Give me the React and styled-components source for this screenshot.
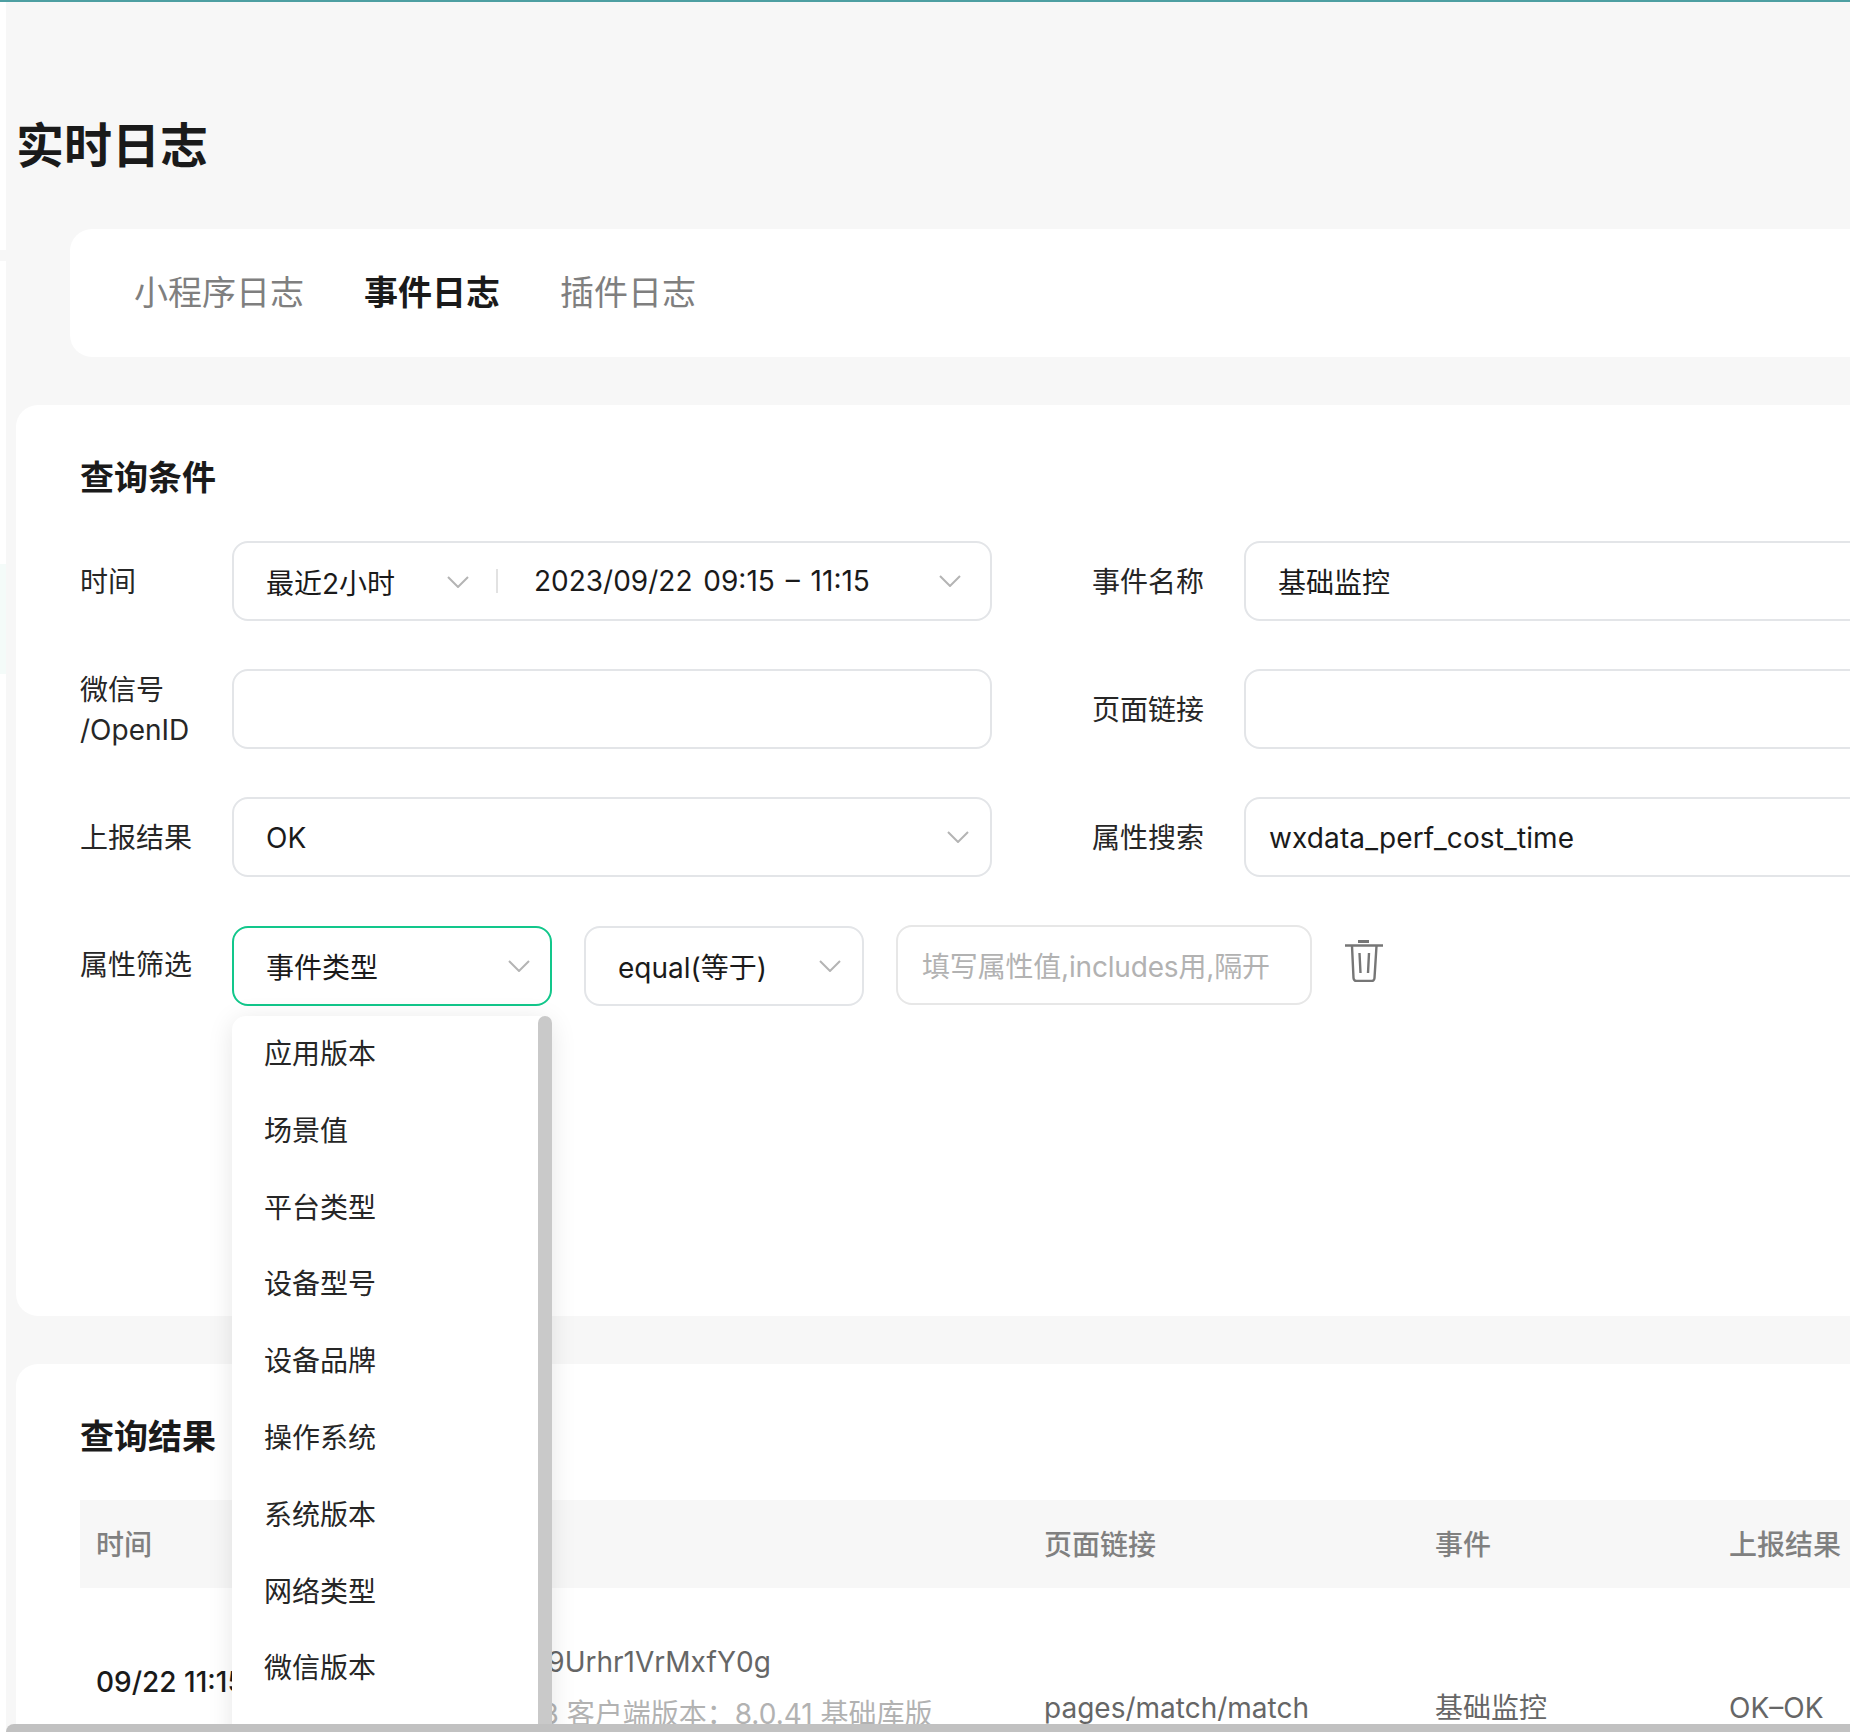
import React from 'react'
import styled, { createGlobalStyle } from 'styled-components'

const GlobalStyle = createGlobalStyle`
    html, body {
        margin: 0;
        padding: 0;
        background: #fff;
    }
    * {
        box-sizing: border-box;
    }
    body {
        font-family: Inter, "Noto Sans CJK SC", sans-serif;
        color: #1a1a1a;
    }
`

const Page = styled.div`
    position: relative;
    display: flex;
    width: 1850px;
    height: 1732px;
    overflow: hidden;
    border-top: 2px solid #4d9fa2;
`

const Rail = styled.div`
    flex: 0 0 6px;
    background: #fff;
`

const RailPatch = styled.div`
    height: ${p => p.$height}px;
    margin-top: ${p => p.$top}px;
    background: ${p => p.$color};
`

const Main = styled.main`
    flex: 1;
    min-width: 0;
    background: #f7f7f7;
`

const PageTitle = styled.h1`
    margin: 0;
    padding: 114px 0 0 10px;
    font-size: 48px;
    line-height: 60px;
    font-weight: 700;
`

const TabBar = styled.nav`
    display: flex;
    align-items: center;
    gap: 60px;
    width: 2200px;
    height: 128px;
    margin: 53px 0 0 64px;
    padding: 0 0 5px 64px;
    background: #fff;
    border-radius: 22px;
`

const Tab = styled.span`
    font-size: 34px;
    font-weight: ${p => (p.$active ? 700 : 400)};
    color: ${p => (p.$active ? '#1a1a1a' : '#7f7f7f')};
`

const Card = styled.section`
    width: 2200px;
    margin: 48px 0 0 10px;
    padding: ${p => p.$top}px 0 ${p => p.$bottom}px 64px;
    background: #fff;
    border-radius: 22px;
`

const CardTitle = styled.h2`
    margin: 0;
    font-size: 34px;
    line-height: 44px;
    font-weight: 700;
`

const Form = styled.div`
    display: flex;
    flex-direction: column;
    gap: 48px;
    margin-top: 41px;
`

const Row = styled.div`
    display: flex;
    align-items: center;
    height: 80px;
`

const FilterRow = styled.div`
    display: flex;
    align-items: flex-start;
`

const Label = styled.label`
    flex: 0 0 152px;
    margin-left: ${p => p.$gap || 0}px;
    padding-top: 2px;
    font-size: 28px;
    line-height: 40px;
    color: #262626;
`

const FilterLabel = styled(Label)`
    padding-top: 20px;
`

const Control = styled.div`
    display: flex;
    align-items: center;
    flex: 0 0 ${p => p.$width || 760}px;
    height: 80px;
    padding-left: ${p => p.$inset || 32}px;
    margin-left: ${p => p.$gap || 0}px;
    margin-top: ${p => p.$top || 0}px;
    border: 2px solid ${p => p.$border || '#e3e5e8'};
    border-radius: 16px;
    background: #fff;
    font-size: 28px;
    color: #1a1a1a;
`

const ControlText = styled.span`
    white-space: nowrap;
`

const DateText = styled(ControlText)`
    word-spacing: 3px;
`

const SearchText = styled(ControlText)`
    padding-top: 2px;
    letter-spacing: 0.12px;
`

const Placeholder = styled.span`
    white-space: nowrap;
    letter-spacing: -0.18px;
    color: #b2b2b2;
`

const RangeSelect = styled.div`
    display: flex;
    align-items: center;
    justify-content: space-between;
    flex: 0 0 203px;
    padding-top: 2px;
`

const RangeDivider = styled.i`
    display: block;
    width: 2px;
    height: 24px;
    margin: 0 36px 0 27px;
    background: #e2e2e2;
`

const ChevronBox = styled.svg`
    flex: none;
    display: block;
    width: 22px;
    height: 12px;
    margin-left: ${p => (p.$inline ? 0 : 'auto')};
    margin-right: ${p => p.$right || 0}px;
    fill: none;
    stroke: #b4b4b4;
    stroke-width: 2;
`

const Chevron = props => (
    <ChevronBox viewBox="0 0 22 12" {...props}>
        <polyline points="1,1 11,11 21,1" />
    </ChevronBox>
)

const SelectAnchor = styled.div`
    position: relative;
    flex: 0 0 320px;
    margin-top: 1px;
`

const Menu = styled.div`
    position: absolute;
    top: 90px;
    left: 0;
    z-index: 5;
    width: 320px;
    height: 760px;
    padding-right: 14px;
    background: #fff;
    border-radius: 14px 14px 0 0;
    box-shadow: 0 4px 26px rgba(0, 0, 0, 0.1);
`

const MenuItem = styled.div`
    height: 76.8px;
    padding-left: 32px;
    font-size: 28px;
    line-height: 76.8px;
    color: #262626;
`

const MenuThumb = styled.div`
    position: absolute;
    top: 0;
    right: 0;
    bottom: 0;
    width: 14px;
    background: #c9c9c9;
    border-radius: 7px 7px 0 0;
`

const TrashBox = styled.svg`
    flex: none;
    width: 38px;
    height: 42px;
    margin: 15px 0 0 33px;
    fill: none;
    stroke: #767676;
    stroke-width: 2.4;
`

const Table = styled.div`
    margin-top: 41px;
`

const TableHead = styled.div`
    display: grid;
    grid-template-columns: 220px 727px 391px 294px 500px;
    align-items: center;
    height: 88px;
    padding-bottom: 3px;
    background: #f7f7f7;
`

const HeadCell = styled.div`
    padding-left: 17px;
    font-size: 28px;
    font-weight: 500;
    color: #808080;
    white-space: nowrap;

    &:first-child {
        padding-left: 16px;
    }
`

const TableRow = styled.div`
    display: grid;
    grid-template-columns: 220px 727px 391px 294px 500px;
    align-items: start;
`

const Cell = styled.div`
    padding: ${p => p.$top}px 0 0 17px;
    font-size: 28px;
    line-height: 40px;
    color: #666;
    white-space: nowrap;
    overflow: hidden;
`

const TimeCell = styled(Cell)`
    padding-left: 16px;
    font-weight: 500;
    color: #1a1a1a;
`

const SubLine = styled.div`
    width: 620px;
    margin-top: 12px;
    overflow: hidden;
    color: #b2b2b2;
`

const PageScrollbar = styled.div`
    position: absolute;
    left: 6px;
    right: 0;
    bottom: 0;
    z-index: 9;
    height: 8px;
    background: #c1c1c1;
    border-radius: 8px 0 0 0;
`

const menuItems = ['应用版本', '场景值', '平台类型', '设备型号', '设备品牌', '操作系统', '系统版本', '网络类型', '微信版本', '语言']

export default function App() {
    return (
        <Page>
            <GlobalStyle />
            <Rail>
                <RailPatch $top={248} $height={11} $color="#f7f7f7" />
                <RailPatch $top={303} $height={110} $color="#f4fbf9" />
            </Rail>
            <Main>
                <PageTitle>实时日志</PageTitle>
                <TabBar>
                    <Tab>小程序日志</Tab>
                    <Tab $active>事件日志</Tab>
                    <Tab>插件日志</Tab>
                </TabBar>

                <Card $top={51} $bottom={310}>
                    <CardTitle>查询条件</CardTitle>
                    <Form>
                        <Row>
                            <Label>时间</Label>
                            <Control>
                                <RangeSelect>
                                    <ControlText>最近2小时</ControlText>
                                    <Chevron $inline />
                                </RangeSelect>
                                <RangeDivider />
                                <DateText>2023/09/22 09:15 – 11:15</DateText>
                                <Chevron $right={29} />
                            </Control>
                            <Label $gap={100}>事件名称</Label>
                            <Control $width={800}>
                                <ControlText>基础监控</ControlText>
                            </Control>
                        </Row>
                        <Row>
                            <Label>
                                微信号
                                <br />
                                /OpenID
                            </Label>
                            <Control />
                            <Label $gap={100}>页面链接</Label>
                            <Control $width={800} />
                        </Row>
                        <Row>
                            <Label>上报结果</Label>
                            <Control>
                                <SearchText>OK</SearchText>
                                <Chevron $right={21} />
                            </Control>
                            <Label $gap={100}>属性搜索</Label>
                            <Control $width={800} $inset={23}>
                                <SearchText>wxdata_perf_cost_time</SearchText>
                            </Control>
                        </Row>
                        <FilterRow>
                            <FilterLabel>属性筛选</FilterLabel>
                            <SelectAnchor>
                                <Control $border="#12c78b">
                                    <ControlText>事件类型</ControlText>
                                    <Chevron $right={20} />
                                </Control>
                                <Menu>
                                    {menuItems.map(item => (
                                        <MenuItem key={item}>{item}</MenuItem>
                                    ))}
                                    <MenuThumb />
                                </Menu>
                            </SelectAnchor>
                            <Control $width={280} $gap={32} $top={1}>
                                <ControlText>equal(等于)</ControlText>
                                <Chevron $right={21} />
                            </Control>
                            <Control $width={416} $gap={32} $inset={24} $border="#e7e7e7">
                                <Placeholder>填写属性值,includes用,隔开</Placeholder>
                            </Control>
                            <TrashBox viewBox="0 0 38 42">
                                <path d="M13 1.5h11" strokeWidth="3" />
                                <path d="M0 5.5h38" />
                                <path d="M7 6l1.5 32a3 3 0 0 0 3 3h15a3 3 0 0 0 3-3L31.5 6" />
                                <path d="M14.5 13l1 20M24 13l-1 20" />
                            </TrashBox>
                        </FilterRow>
                    </Form>
                </Card>

                <Card $top={51} $bottom={60}>
                    <CardTitle>查询结果</CardTitle>
                    <Table>
                        <TableHead>
                            <HeadCell>时间</HeadCell>
                            <HeadCell>用户信息</HeadCell>
                            <HeadCell>页面链接</HeadCell>
                            <HeadCell>事件</HeadCell>
                            <HeadCell>上报结果</HeadCell>
                        </TableHead>
                        <TableRow>
                            <TimeCell $top={74}>09/22 11:15</TimeCell>
                            <Cell $top={54}>
                                oHw3s5Kd0WpZl9Urhr1VrMxfY0g
                                <SubLine>iPhone 13 iOS 16.3 客户端版本：8.0.41 基础库版</SubLine>
                            </Cell>
                            <Cell $top={100}>pages/match/match</Cell>
                            <Cell $top={100}>基础监控</Cell>
                            <Cell $top={100}>OK–OK</Cell>
                        </TableRow>
                    </Table>
                </Card>
            </Main>
            <PageScrollbar />
        </Page>
    )
}
